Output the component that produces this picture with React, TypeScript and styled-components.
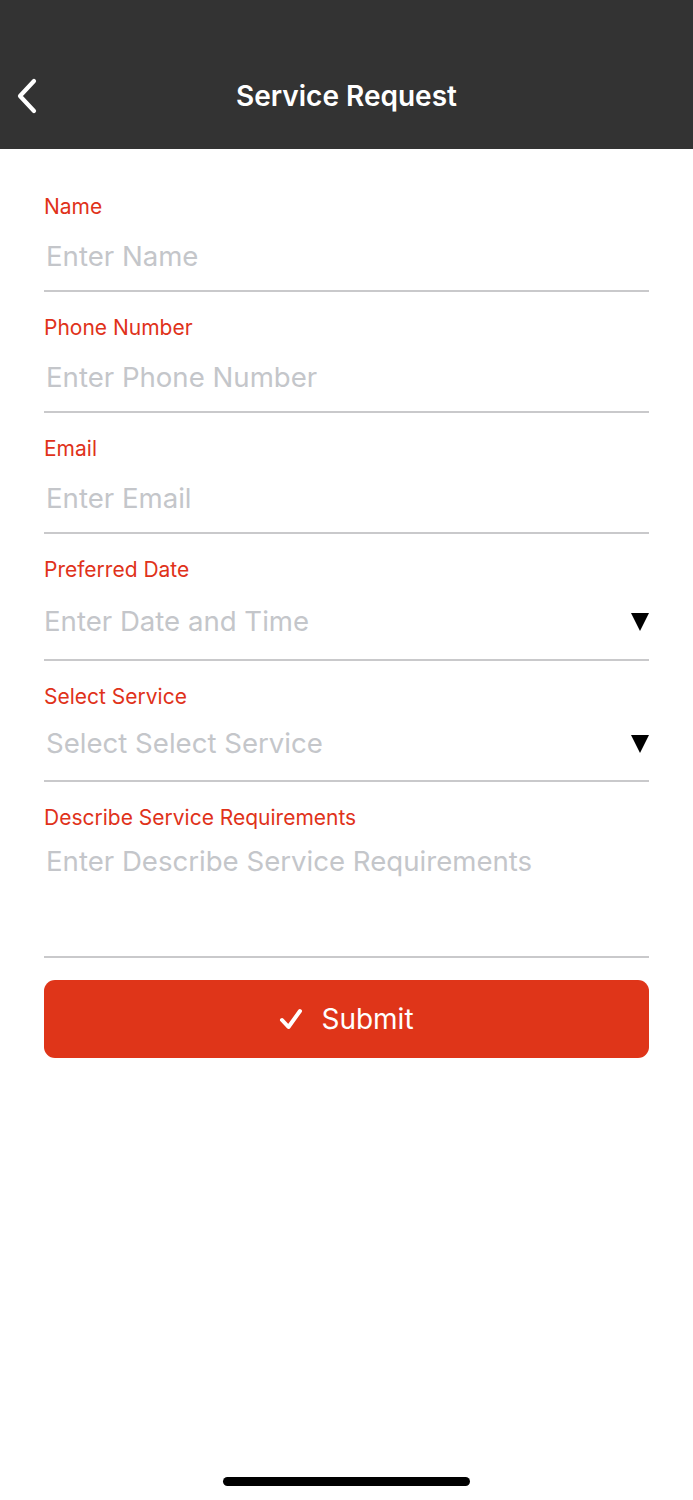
import { FC } from 'react';
import styled, { createGlobalStyle } from 'styled-components';

const GlobalStyle = createGlobalStyle`
  html, body {
    margin: 0;
    padding: 0;
    background: #ffffff;
    font-family: Inter, "Noto Sans", "Liberation Sans", sans-serif;
  }
  * {
    box-sizing: border-box;
  }
`;

const Screen = styled.div`
  width: 693px;
  height: 1500px;
  display: flex;
  flex-direction: column;
  background: #ffffff;
`;

const Header = styled.header`
  height: 149px;
  padding-top: 60px;
  padding-bottom: 18px;
  background: #333333;
  display: grid;
  grid-template-columns: 60px 1fr 60px;
  align-items: center;
`;

const BackButton = styled.button`
  border: 0;
  background: none;
  padding: 0 0 0 14px;
  height: 40px;
  display: flex;
  align-items: center;
  cursor: pointer;
`;

const Title = styled.h1`
  margin: 0;
  text-align: center;
  color: #ffffff;
  font-size: 28px;
  font-weight: 600;
  letter-spacing: 0;
`;

const Form = styled.form`
  display: flex;
  flex-direction: column;
  gap: 24px;
  padding: 46px 44px 0;
`;

const Field = styled.label`
  display: flex;
  flex-direction: column;
`;

const Label = styled.span`
  color: #e0321a;
  font-size: 21px;
  line-height: 24px;
`;

const Row = styled.div<{ $height: number; $top: number; $indent: number }>`
  height: ${p => p.$height}px;
  padding-top: ${p => p.$top}px;
  padding-left: ${p => p.$indent}px;
  display: flex;
  align-items: flex-start;
  justify-content: space-between;
  border-bottom: 2px solid #c9c9cb;
`;

const TextInput = styled.input`
  flex: 1;
  border: 0;
  outline: none;
  padding: 0;
  background: transparent;
  font-family: inherit;
  font-size: 27.6px;
  line-height: 34px;
  height: 34px;
  color: #222;

  &::placeholder {
    color: #c4c6ca;
  }
`;

const Placeholder = styled.span`
  font-size: 27.6px;
  line-height: 34px;
  color: #c4c6ca;
`;

const Arrow = styled.span`
  width: 20px;
  margin-top: 8px;
  margin-right: -1px;
  display: flex;
`;

const SubmitButton = styled.button`
  margin-top: -2px;
  height: 78px;
  border: 0;
  border-radius: 11px;
  background: #df3519;
  color: #ffffff;
  font-family: inherit;
  font-size: 28px;
  display: flex;
  align-items: center;
  justify-content: center;
  gap: 18px;
  cursor: pointer;
`;

const Spacer = styled.div`
  flex: 1;
`;

const HomeBar = styled.div`
  align-self: center;
  width: 247px;
  height: 9px;
  border-radius: 5px;
  background: #000000;
  margin-bottom: 14px;
`;

const DownTriangle: FC = () => (
  <svg width="20" height="19" viewBox="0 0 20 19">
    <path d="M1 1 H19 L10 19 Z" fill="#000" />
  </svg>
);

type InputFieldProps = { label: string; height?: number; top?: number };

const InputField: FC<InputFieldProps> = ({ label, height = 73, top = 20 }) => (
  <Field>
    <Label>{label}</Label>
    <Row $height={height} $top={top} $indent={2}>
      <TextInput placeholder={`Enter ${label}`} />
    </Row>
  </Field>
);

type PickerFieldProps = { label: string; placeholder: string; height: number; top: number; indent: number };

const PickerField: FC<PickerFieldProps> = ({ label, placeholder, height, top, indent }) => (
  <Field>
    <Label>{label}</Label>
    <Row $height={height} $top={top} $indent={indent}>
      <Placeholder>{placeholder}</Placeholder>
      <Arrow>
        <DownTriangle />
      </Arrow>
    </Row>
  </Field>
);

export default function App() {
  return (
    <Screen>
      <GlobalStyle />
      <Header>
        <BackButton type="button" aria-label="Back">
          <svg width="26" height="36" viewBox="0 0 26 36">
            <path d="M20 3 L6 18 L20 33" fill="none" stroke="#fff" strokeWidth="4.2" strokeLinecap="round" strokeLinejoin="round" />
          </svg>
        </BackButton>
        <Title>Service Request</Title>
        <div />
      </Header>

      <Form onSubmit={e => e.preventDefault()}>
        <InputField label="Name" />
        <InputField label="Phone Number" />
        <InputField label="Email" />
        <PickerField label="Preferred Date" placeholder="Enter Date and Time" height={79} top={22} indent={0} />
        <PickerField label="Select Service" placeholder="Select Select Service" height={73} top={17} indent={2} />
        <InputField label="Describe Service Requirements" height={128} top={14} />
        <SubmitButton type="submit">
          <svg width="24" height="24" viewBox="0 0 24 24">
            <path d="M3 13 L9.5 20 L21 4" fill="none" stroke="#fff" strokeWidth="4" strokeLinecap="round" strokeLinejoin="round" />
          </svg>
          Submit
        </SubmitButton>
      </Form>

      <Spacer />
      <HomeBar />
    </Screen>
  );
}
